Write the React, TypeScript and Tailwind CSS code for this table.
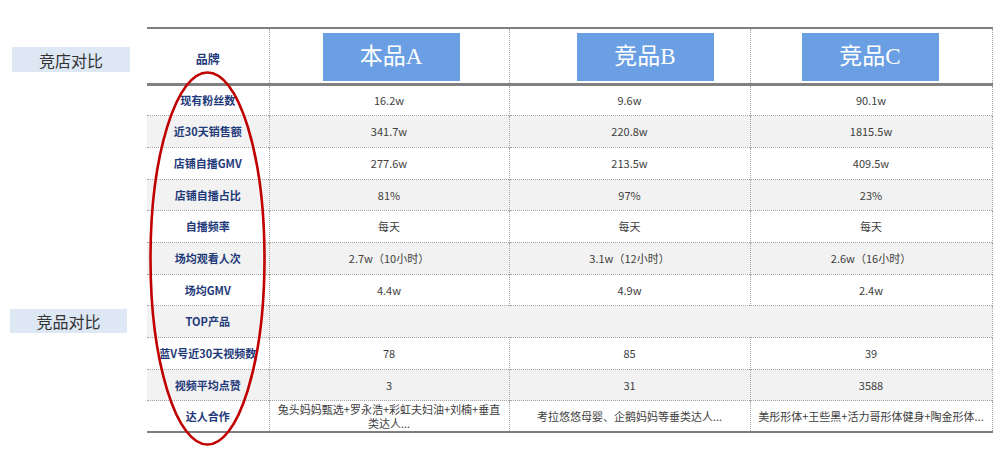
import React from "react";

type Row = { label: string; a: string; b: string; c: string; merged?: boolean; long?: boolean };

const rows: Row[] = [
  { label: "现有粉丝数", a: "16.2w", b: "9.6w", c: "90.1w" },
  { label: "近30天销售额", a: "341.7w", b: "220.8w", c: "1815.5w" },
  { label: "店铺自播GMV", a: "277.6w", b: "213.5w", c: "409.5w" },
  { label: "店铺自播占比", a: "81%", b: "97%", c: "23%" },
  { label: "自播频率", a: "每天", b: "每天", c: "每天" },
  { label: "场均观看人次", a: "2.7w（10小时）", b: "3.1w（12小时）", c: "2.6w（16小时）" },
  { label: "场均GMV", a: "4.4w", b: "4.9w", c: "2.4w" },
  { label: "TOP产品", a: "", b: "", c: "", merged: true },
  { label: "蓝V号近30天视频数", a: "78", b: "85", c: "39" },
  { label: "视频平均点赞", a: "3", b: "31", c: "3588" },
  {
    label: "达人合作",
    a: "兔头妈妈甄选+罗永浩+彩虹夫妇油+刘楠+垂直类达人...",
    b: "考拉悠悠母婴、企鹅妈妈等垂类达人...",
    c: "美彤形体+王些黑+活力哥形体健身+陶金形体...",
    long: true,
  },
];

// header boxes sit a little off-centre in their columns
const brands = [
  { name: "本品A", offset: "ml-[53px]" },
  { name: "竞品B", offset: "ml-[67px]" },
  { name: "竞品C", offset: "ml-[51px]" },
];

const cjk = { fontFamily: '"Noto Sans CJK SC", "Noto Sans", sans-serif' };

export default function App() {
  return (
    <div className="relative w-[1005px] h-[457px] bg-white overflow-hidden" style={cjk}>
      <div className="flex pt-[27px]">
        {/* side labels */}
        <div className="w-[147px] shrink-0 flex flex-col">
          <div className="mt-[20px] ml-[12px] w-[118px] h-[25px] bg-[#dde8f4] flex items-center justify-center text-[16px] text-[#333] leading-none">
            竞店对比
          </div>
          <div className="mt-[237px] ml-[10px] w-[117px] h-[24px] bg-[#dde8f4] flex items-center justify-center text-[16px] text-[#333] leading-none">
            竞品对比
          </div>
        </div>

        {/* comparison table */}
        <table className="table-fixed border-collapse w-[845px] border-t-2 border-b-2 border-t-[#7f7f7f] border-b-[#7f7f7f]">
          <colgroup>
            <col className="w-[122px]" />
            <col className="w-[240px]" />
            <col className="w-[241px]" />
            <col className="w-[242px]" />
          </colgroup>
          <thead>
            <tr className="h-[56px] border-b-[3px] border-b-[#808080]">
              <th className="text-[12px] font-bold text-[#1f3a7a] text-center pt-[6px] border-r border-dotted border-[#a6a6a6]">品牌</th>
              {brands.map((b) => (
                <th key={b.name} className="border-r border-dotted border-[#a6a6a6] align-top pt-[4px] px-0">
                  <div
                    className={`${b.offset} w-[137px] h-[48px] bg-[#6b9fe3] flex items-center justify-center text-white text-[23px] font-normal`}
                    style={{ fontFamily: '"Liberation Serif", "Noto Sans CJK SC", serif' }}
                  >
                    {b.name}
                  </div>
                </th>
              ))}
            </tr>
          </thead>
          <tbody>
            {rows.map((r, i) => (
              <tr
                key={r.label}
                className={`${r.long ? "h-[30px]" : "h-[31.7px]"} ${i % 2 === 1 ? "bg-[#f2f2f2]" : "bg-white"} border-t border-dotted border-[#a6a6a6]`}
              >
                <td className="text-center text-[11px] font-bold text-[#1f3a7a] whitespace-nowrap border-r border-dotted border-[#a6a6a6] px-0">
                  {r.label}
                </td>
                {r.merged ? (
                  <td colSpan={3} className="border-r border-dotted border-[#a6a6a6]" />
                ) : (
                  [r.a, r.b, r.c].map((v, j) => (
                    <td
                      key={j}
                      className={`text-center text-[#404040] border-r border-dotted border-[#a6a6a6] ${
                        r.long ? "text-[11px] leading-[14px] px-[5px] py-[1px]" : "text-[11px]"
                      }`}
                    >
                      {v}
                    </td>
                  ))
                )}
              </tr>
            ))}
          </tbody>
        </table>
      </div>

      {/* red highlight ellipse over the label column */}
      <svg className="absolute left-0 top-0 pointer-events-none" width="1005" height="457">
        <ellipse cx="207.5" cy="258.5" rx="57" ry="186" fill="none" stroke="#c00000" strokeWidth="2.6" />
      </svg>
    </div>
  );
}
